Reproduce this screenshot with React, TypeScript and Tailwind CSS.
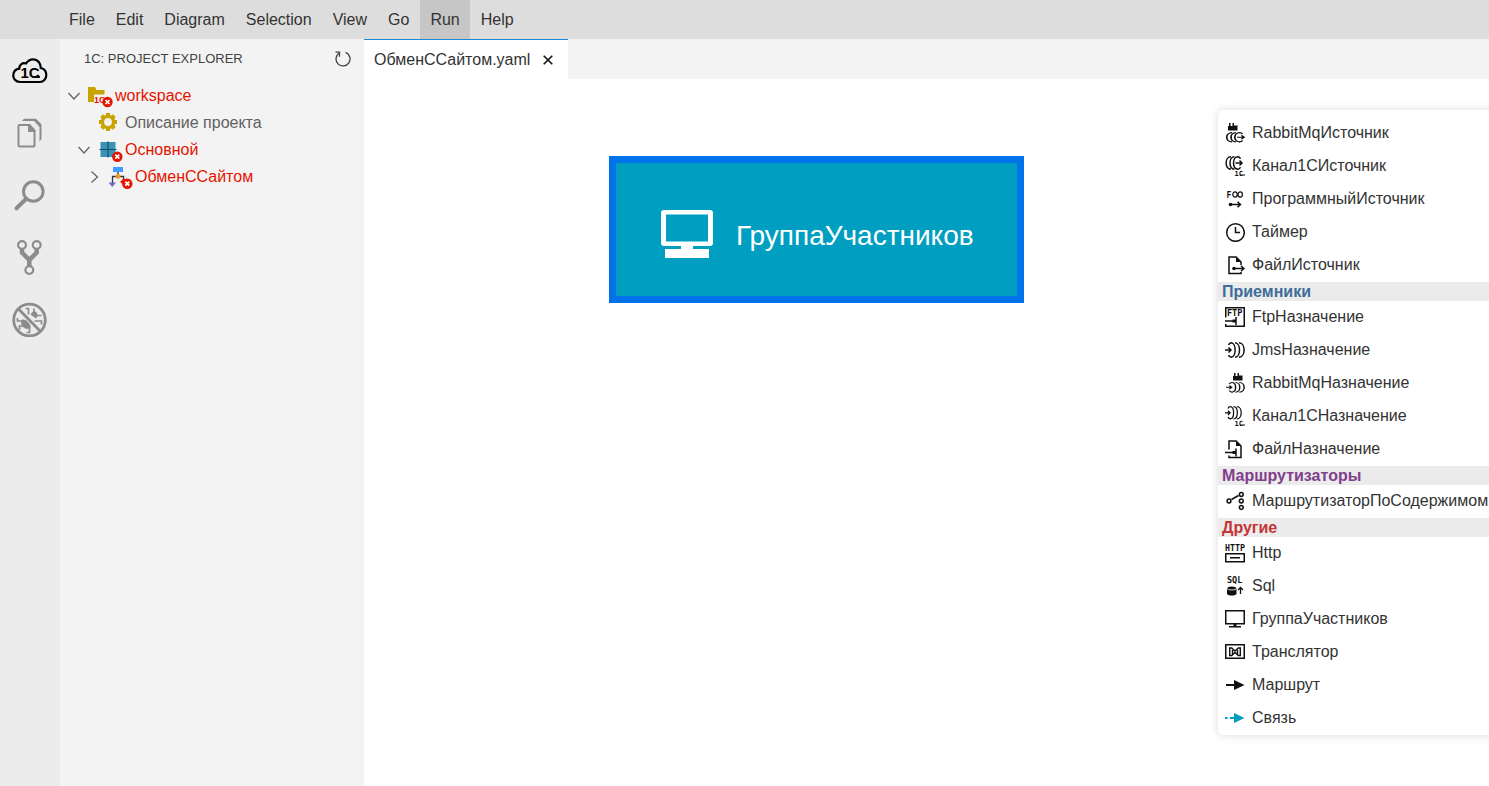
import React from 'react';

interface PaletteItem {
  label: string;
  icon: React.ReactNode;
}

interface PaletteGroup {
  title?: string;
  titleClass?: string;
  items: PaletteItem[];
}

const menuItems = ['File', 'Edit', 'Diagram', 'Selection', 'View', 'Go', 'Run', 'Help'];

const Glyph: React.FC<{ children: React.ReactNode }> = ({ children }) => (
  <svg
    viewBox="0 0 20 20"
    className="h-5 w-5 shrink-0"
    fill="none"
    stroke="#111"
    strokeWidth="1.5"
    aria-hidden="true"
  >
    {children}
  </svg>
);

const GlyphText: React.FC<{ x: number; y: number; size: number; children: string }> = ({
  x,
  y,
  size,
  children,
}) => (
  <text
    x={x}
    y={y}
    fontSize={size}
    fontWeight="700"
    fill="#111"
    stroke="none"
    fontFamily="'DejaVu Sans Mono', monospace"
  >
    {children}
  </text>
);

const Rabbit = ({ x }: { x: number }) => (
  <path
    transform={`translate(${x} 0)`}
    d="M0 3h1V0h1.5v3h2V0H6v2.5h3.5v5H0z"
    fill="#111"
    stroke="none"
  />
);

// Source coils bulge to the left, target coils bulge to the right
const SourceCoil = () => (
  <>
    <path d="M6 .8C-.5.8-.5 13.200 6 13.200M9.500.8C3.500.8 3.500 13.200 9.500 13.200M13 .8C7 .8 7 13.200 13 13.200" />
    <path d="M12.500.8c1.500 0 2.500.7 3 2M12.500 13.200c1.500 0 2.500-.7 3-2" />
    <path d="M10.500 7h6.500M14.500 4.500L17 7l-2.500 2.500" />
  </>
);

const TargetCoil = () => (
  <>
    <path d="M6 .8c5.500 0 5.500 14.400 0 14.400M10 .8c6 0 6 14.400 0 14.400M14 .8c6.800 0 6.800 14.400 0 14.400" />
    <path d="M6.500.8C5 .8 4 1.500 3.500 3M6.500 15.200c-1.500 0-2.500-.7-3-2.200" />
    <path d="M0 8h6M3.500 5.500L6 8l-2.500 2.500" />
  </>
);

const Plug = () => (
  <>
    <path d="M0 13.500h8M11 9.500v8" />
    <path d="M7.500 12H11v3H7.500z" fill="#111" stroke="none" />
  </>
);

const sourceItems: PaletteItem[] = [
  {
    label: 'RabbitMqИсточник',
    icon: (
      <Glyph>
        <Rabbit x={3} />
        <g transform="translate(.5 9) scale(1.1 .75)">
          <SourceCoil />
        </g>
      </Glyph>
    ),
  },
  {
    label: 'Канал1СИсточник',
    icon: (
      <Glyph>
        <SourceCoil />
        <GlyphText x={9.5} y={19.5} size={7}>1С</GlyphText>
        <path d="M15 19h5" strokeWidth="1" />
      </Glyph>
    ),
  },
  {
    label: 'ПрограммныйИсточник',
    icon: (
      <Glyph>
        <GlyphText x={1.5} y={8.5} size={8}>F</GlyphText>
        <ellipse cx="10" cy="5.5" rx="2.2" ry="2.7" strokeWidth="1.2" />
        <ellipse cx="15.2" cy="5.5" rx="2.2" ry="2.7" strokeWidth="1.2" />
        <circle cx="5.5" cy="15.5" r="1.8" fill="#111" stroke="none" />
        <path d="M5 15.500h10M12.500 12.700l3 2.800-3 2.800" />
      </Glyph>
    ),
  },
  {
    label: 'Таймер',
    icon: (
      <Glyph>
        <circle cx="10.5" cy="10.5" r="8.8" />
        <path d="M10.500 5v5.500H15" />
      </Glyph>
    ),
  },
  {
    label: 'ФайлИсточник',
    icon: (
      <Glyph>
        <path d="M16 10V7l-5-5H4v16.500h12V17" />
        <path d="M11 1.500V7h5.500z" fill="#111" stroke="none" />
        <circle cx="9" cy="13.5" r="1.8" fill="#111" stroke="none" />
        <path d="M9 13.500h9.500M16 10.800l3 2.700-3 2.700" />
      </Glyph>
    ),
  },
];

const targetItems: PaletteItem[] = [
  {
    label: 'FtpНазначение',
    icon: (
      <Glyph>
        <path d="M.75 10.500V.75h18.500v18.500H.75V17" />
        <GlyphText x={2} y={8.5} size={8.5}>FTP</GlyphText>
        <g transform="translate(0 .5)">
          <Plug />
        </g>
      </Glyph>
    ),
  },
  {
    label: 'JmsНазначение',
    icon: (
      <Glyph>
        <g transform="translate(0 2)">
          <TargetCoil />
        </g>
      </Glyph>
    ),
  },
  {
    label: 'RabbitMqНазначение',
    icon: (
      <Glyph>
        <Rabbit x={8} />
        <g transform="translate(1 9) scale(.95 .67)">
          <TargetCoil />
        </g>
      </Glyph>
    ),
  },
  {
    label: 'Канал1СНазначение',
    icon: (
      <Glyph>
        <g transform="scale(.85 .85)">
          <TargetCoil />
        </g>
        <GlyphText x={9.5} y={19.5} size={7}>1С</GlyphText>
        <path d="M15 19h5" strokeWidth="1" />
      </Glyph>
    ),
  },
  {
    label: 'ФайлНазначение',
    icon: (
      <Glyph>
        <path d="M4 10.500V2h7l5 5v11.500H4V16.500" />
        <path d="M11 1.500V7h5.500z" fill="#111" stroke="none" />
        <Plug />
      </Glyph>
    ),
  },
];

const routerItems: PaletteItem[] = [
  {
    label: 'МаршрутизаторПоСодержимом',
    icon: (
      <Glyph>
        <circle cx="4" cy="10" r="1.9" />
        <circle cx="16.3" cy="3.5" r="1.9" />
        <circle cx="16.3" cy="10" r="1.9" />
        <circle cx="16.3" cy="16.5" r="1.9" />
        <path d="M6.500 8.500l7-4" />
      </Glyph>
    ),
  },
];

const otherItems: PaletteItem[] = [
  {
    label: 'Http',
    icon: (
      <Glyph>
        <GlyphText x={0} y={7.5} size={8.3}>HTTP</GlyphText>
        <path d="M.75 10.750h18.500v8H.75zM5 14.750h10" />
      </Glyph>
    ),
  },
  {
    label: 'Sql',
    icon: (
      <Glyph>
        <GlyphText x={2} y={6.5} size={8.5}>SQL</GlyphText>
        <path d="M2 12.500c0-2.700 9.500-2.700 9.500 0v5c0 2.700-9.500 2.700-9.500 0z" fill="#111" stroke="none" />
        <path d="M2 12.300c0 2.200 9.500 2.200 9.500 0" stroke="#fff" strokeWidth=".8" />
        <path d="M15.500 18v-6M13 14l2.500-2.500L18 14" strokeWidth="1.3" />
      </Glyph>
    ),
  },
  {
    label: 'ГруппаУчастников',
    icon: (
      <Glyph>
        <path d="M.75 1.750h18.500v13H.75z" />
        <path d="M8.500 15h3v2.500h-3zM4 17h12v1.500H4z" fill="#111" stroke="none" />
      </Glyph>
    ),
  },
  {
    label: 'Транслятор',
    icon: (
      <Glyph>
        <path d="M.75 2.750h18.500v13.500H.75z" />
        <path d="M4.700 6v7.500h2L10 10.500l3.300 3h2V6h-2L10 9 6.700 6zM7.500 6.500V13M12.500 6.500V13" strokeWidth="1.4" />
      </Glyph>
    ),
  },
  {
    label: 'Маршрут',
    icon: (
      <Glyph>
        <path d="M1 10h9" strokeWidth="2" />
        <path d="M9 5l10.500 5L9 15z" fill="#111" stroke="none" />
      </Glyph>
    ),
  },
  {
    label: 'Связь',
    icon: (
      <Glyph>
        <path d="M0 10h2.500M5 10h5" stroke="#009fc1" strokeWidth="2" />
        <path d="M9 5l10.500 5L9 15z" fill="#009fc1" stroke="none" />
      </Glyph>
    ),
  },
];

const palette: PaletteGroup[] = [
  { items: sourceItems },
  { title: 'Приемники', titleClass: 'text-[#3d6d99]', items: targetItems },
  { title: 'Маршрутизаторы', titleClass: 'text-[#7f3f8c]', items: routerItems },
  { title: 'Другие', titleClass: 'text-[#c53535]', items: otherItems },
];

const activities = [
  {
    label: '1C: Project Explorer',
    color: 'text-black',
    icon: (
      <>
        <path
          d="M8 29C3.500 29 1 25.500 1.300 22c.2-3.500 2.700-6 6-6.400 0-4.100 3.200-6.300 6.700-5.100 2-3.200 4.500-4.200 7-4.200 5 0 7.800 4.200 7.800 8.700 3.700.8 5.500 4 5.500 7 0 4-2.800 7-6.300 7z"
          strokeWidth="2.2"
        />
        <text
          x="8.5"
          y="25"
          fontSize="15"
          fontWeight="700"
          fill="currentColor"
          stroke="none"
          fontFamily="'Liberation Sans', Arial, sans-serif"
        >
          1C
        </text>
        <path d="M22 24h6" strokeWidth="1.8" />
      </>
    ),
  },
  {
    label: 'Explorer',
    color: 'text-[#8c8c8c]',
    icon: (
      <>
        <path d="M16.500 10h-9a1 1 0 0 0-1 1v19.500a1 1 0 0 0 1 1h14a1 1 0 0 0 1-1V16" strokeWidth="2" />
        <path
          d="M16 9h2l5.500 6v2H16zM10 6l2-2.200h12l5.500 5.700V24l-2 2.500V12L22 6z"
          fill="currentColor"
          stroke="none"
        />
      </>
    ),
  },
  {
    label: 'Search',
    color: 'text-[#8c8c8c]',
    icon: (
      <>
        <circle cx="21.3" cy="14.5" r="9.8" strokeWidth="3" />
        <path d="M14 22L4.500 31.300" strokeWidth="4" strokeLinecap="round" />
      </>
    ),
  },
  {
    label: 'Source Control',
    color: 'text-[#8c8c8c]',
    icon: (
      <>
        <circle cx="10" cy="6" r="3.9" strokeWidth="2.2" />
        <circle cx="24.7" cy="6" r="3.9" strokeWidth="2.2" />
        <circle cx="17.3" cy="31" r="3.9" strokeWidth="2.2" />
        <path d="M10 10v3.500l7.300 7.500 7.400-7.500V10M17.300 20v7" strokeWidth="4.5" />
      </>
    ),
  },
  {
    label: 'Debug',
    color: 'text-[#8c8c8c]',
    icon: (
      <>
        <circle cx="17.5" cy="19" r="15.8" strokeWidth="2.8" />
        <path d="M6.500 8l22 22.500" strokeWidth="2.8" />
        <path
          d="M9.500 19c2-1 4-.5 6.300 1.800s3.200 4.200 2.700 6.200c-2.500 1.500-5.500 1-7.500-1s-2.500-4.500-1.500-7zM18.500 13.500c1-2.500 3.500-3.500 5.500-2.500 2 1.500 2 4.500 0 6.500z"
          fill="currentColor"
          stroke="none"
        />
        <path
          d="M13.500 7.500h3v6M10.500 20H5.500v-3M11 25H7.500v4M17.500 25.500v6h-3M22 12V7.500M24 14.500h5.500M22.500 20h7v3.500"
          strokeWidth="1.7"
        />
      </>
    ),
  },
];

const ErrorBadge = ({ x, y }: { x: number; y: number }) => (
  <g transform={`translate(${x} ${y})`}>
    <circle r="5.2" fill="#e51400" />
    <path d="M-2-2L2 2M2-2L-2 2" stroke="#fff" strokeWidth="1.7" />
  </g>
);

const gearTeeth = [0, 45, 90, 135, 180, 225, 270, 315];

const treeRows = [
  {
    label: 'workspace',
    indent: 'pl-2',
    color: 'text-[#e51400]',
    expanded: true,
    icon: (
      <>
        <path d="M1 5h7l1.500 3h8v4.500H7V20H1z" fill="#c9a400" />
        <text
          x="7"
          y="20.5"
          fontSize="9"
          fontWeight="700"
          fill="#e51400"
          fontFamily="'Liberation Sans', Arial, sans-serif"
        >
          1C
        </text>
        <ErrorBadge x={20.5} y={20} />
      </>
    ),
  },
  {
    label: 'Описание проекта',
    indent: 'pl-[18px]',
    color: 'text-[#616161]',
    icon: (
      <g fill="#c9a400">
        <circle cx="11" cy="13" r="5.6" fill="none" stroke="#c9a400" strokeWidth="3.4" />
        {gearTeeth.map((angle) => (
          <rect key={angle} x="9" y="4" width="4" height="3.5" transform={`rotate(${angle} 11 13)`} />
        ))}
      </g>
    ),
  },
  {
    label: 'Основной',
    indent: 'pl-[18px]',
    color: 'text-[#e51400]',
    expanded: true,
    icon: (
      <>
        <path d="M3.500 6h15v15h-15z" fill="#3a93b5" />
        <path d="M11 5.500v16M2.500 13.500h17" stroke="#174f70" strokeWidth="1.2" />
        <ErrorBadge x={20.3} y={20.7} />
      </>
    ),
  },
  {
    label: 'ОбменССайтом',
    indent: 'pl-7',
    color: 'text-[#e51400]',
    expanded: false,
    icon: (
      <>
        <path d="M5.500 20v-6.500h11V18M11 9v4" fill="none" stroke="#333" strokeWidth="1.3" />
        <path d="M6 4h10v5H6z" fill="#3f9bff" />
        <circle cx="11" cy="13.5" r="2.4" fill="#f39a26" />
        <path d="M1.500 19.500H9l-3.700 4.500z" fill="#6a6ac8" />
        <path d="M13 18.700l4-3.500 4 3.500-4 4z" fill="#e51400" />
        <ErrorBadge x={20.3} y={20.7} />
      </>
    ),
  },
];

const App: React.FC = () => {
  return (
    <div className="flex h-screen flex-col overflow-hidden bg-white font-['Liberation_Sans',Arial,sans-serif] text-base text-[#333]">
      {/* Menu bar */}
      <nav className="flex h-[39px] shrink-0 gap-px bg-[#dddddd] pl-[59px]">
        {menuItems.map((item) => (
          <button key={item} className={item === 'Run' ? 'bg-[#c6c6c6] px-[10px]' : 'px-[10px]'}>
            {item}
          </button>
        ))}
      </nav>

      <div className="flex min-h-0 flex-1">
        {/* Activity bar */}
        <aside className="flex w-[60px] shrink-0 flex-col items-center gap-[26px] bg-[#ececec] pt-[14px]">
          {activities.map((activity) => (
            <button key={activity.label} aria-label={activity.label} className={activity.color}>
              <svg viewBox="0 0 36 36" className="h-9 w-9" fill="none" stroke="currentColor">
                {activity.icon}
              </svg>
            </button>
          ))}
        </aside>

        {/* Project explorer */}
        <section className="w-[304px] shrink-0 bg-[#f3f3f3]">
          <div className="flex h-[43px] items-start justify-between pt-[10px] pr-[13px] pl-6">
            <h2 className="text-[13px] leading-5 text-[#424242]">1C: PROJECT EXPLORER</h2>
            <button aria-label="Refresh" className="pt-[2px]">
              <svg viewBox="0 0 16 16" className="h-4 w-4" fill="none" stroke="#424242" strokeWidth="1.3">
                <path d="M10.500 1.400A7 7 0 1 1 4.300 2" />
                <path d="M.5 1.200h4v4.500" />
              </svg>
            </button>
          </div>
          <ul>
            {treeRows.map((row) => (
              <li key={row.label}>
                <button className={`flex h-[27px] w-full items-center ${row.indent} ${row.color}`}>
                  <svg viewBox="0 0 12 12" className="mr-[7px] h-3 w-3" fill="none" stroke="#616161" strokeWidth="1.2">
                    {row.expanded === true && <path d="M.5 3L6 9l5.500-6" />}
                    {row.expanded === false && <path d="M3.500.5L9.500 6l-6 5.500" />}
                  </svg>
                  <svg viewBox="0 0 28 27" className="h-[27px] w-7" aria-hidden="true">
                    {row.icon}
                  </svg>
                  {row.label}
                </button>
              </li>
            ))}
          </ul>
        </section>

        {/* Editor */}
        <main className="flex min-w-0 flex-1 flex-col">
          <div className="flex h-10 shrink-0 bg-[#f3f3f3]">
            <div className="flex items-center gap-[13px] border-t border-[#1a8ad4] bg-white pr-[15px] pl-[10px]">
              <span>ОбменССайтом.yaml</span>
              <button aria-label="Close">
                <svg viewBox="0 0 10 10" className="h-[10px] w-[10px]" stroke="#111" strokeWidth="1.6">
                  <path d="M.7.7l8.600 8.600M9.300.7L.7 9.300" />
                </svg>
              </button>
            </div>
          </div>

          <div className="relative flex-1 overflow-hidden bg-white">
            {/* Diagram node */}
            <div className="absolute top-[77px] left-[245px] flex h-[147px] items-center gap-[23px] border-[7px] border-[#0073ea] bg-[#009fc1] pt-2 pr-[43px] pl-[45px]">
              <svg viewBox="0 0 52 48" className="h-12 w-[52px]" fill="#fff">
                <path
                  fillRule="evenodd"
                  d="M3 0h46a3 3 0 0 1 3 3v30a3 3 0 0 1-3 3H3a3 3 0 0 1-3-3V3a3 3 0 0 1 3-3zM5 4.500v27h42v-27z"
                />
                <path d="M20 35h12v4h16v9H4v-9h16z" />
              </svg>
              <span className="pt-1 text-[28px] text-white">ГруппаУчастников</span>
            </div>

            {/* Tool palette */}
            <div className="absolute top-[31px] right-[-59px] w-[330px] rounded-md bg-white pt-[7px] shadow-[0_0_10px_rgba(0,0,0,0.15)]">
              {palette.map((group, index) => (
                <div key={index}>
                  {group.title && (
                    <h3 className={`h-[19px] bg-[#ebebeb] pl-1 leading-[19px] font-bold ${group.titleClass}`}>
                      {group.title}
                    </h3>
                  )}
                  {group.items.map((item) => (
                    <button
                      key={item.label}
                      className="flex h-[33px] w-full items-center gap-[7px] pb-px pl-[7px] text-left whitespace-nowrap"
                    >
                      {item.icon}
                      {item.label}
                    </button>
                  ))}
                </div>
              ))}
            </div>
          </div>
        </main>
      </div>
    </div>
  );
};

export default App;
